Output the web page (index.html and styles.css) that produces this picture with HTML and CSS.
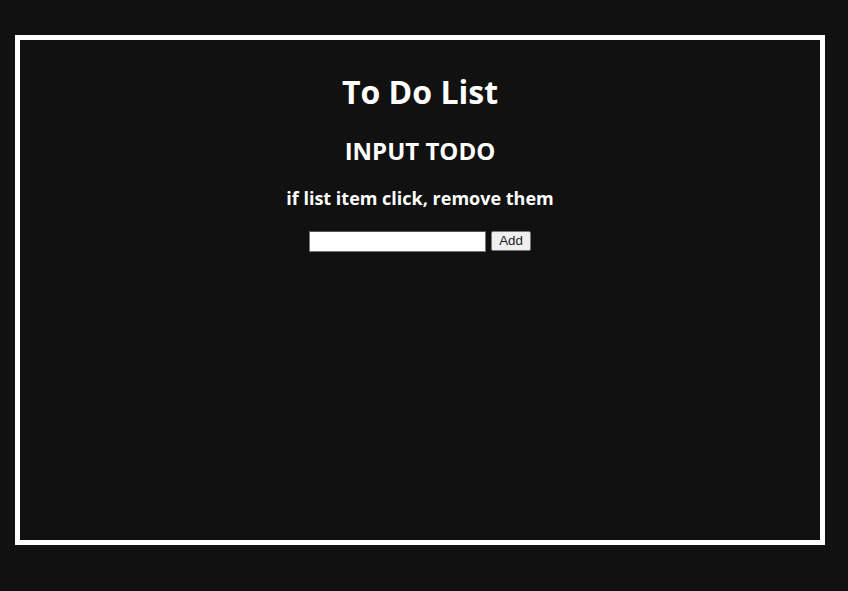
FILE: index.html
```html
<!DOCTYPE html>
<html>
<head>
<meta charset="utf-8">
<link rel="stylesheet" href="styles.css">
</head>
<body>
<div class="frame">
  <h1 class="title">To Do List</h1>
  <h2 class="subtitle">INPUT TODO</h2>
  <h3 class="hint">if list item click, remove them</h3>
  <div class="form">
    <input class="todo-input" type="text">
    <button class="add-btn">Add</button>
  </div>
  <ul class="list"></ul>
</div>
</body>
</html>
```
FILE: styles.css
```css
html, body {
  margin: 0;
  padding: 0;
  background: #111111;
}
body {
  padding: 35px 15px 0 15px;
  font-family: "Open Sans", "Noto Sans CJK KR", sans-serif;
  color: #ffffff;
}
.frame {
  width: 800px;
  height: 500px;
  border: 5px solid #ffffff;
  display: flex;
  flex-direction: column;
  align-items: center;
}
.title {
  margin: 32px 0 0 0;
  font-size: 32px;
  line-height: 40px;
  font-weight: 700;
}
.subtitle {
  margin: 24px 0 0 0;
  font-size: 24px;
  line-height: 30px;
  font-weight: 700;
}
.hint {
  margin: 19px 0 0 0;
  font-size: 18px;
  line-height: 26px;
  font-weight: 700;
}
.form {
  margin-top: 20px;
  display: flex;
  align-items: flex-start;
  gap: 5px;
}
.todo-input {
  width: 177px;
  height: 21px;
  box-sizing: border-box;
  margin: 0;
  border: 1px solid #767676;
  border-top-color: #555;
  background: #ffffff;
  padding: 1px 2px;
}
.add-btn {
  width: 40px;
  height: 20px;
  box-sizing: border-box;
  margin: 0;
  padding: 0;
  border: 1px solid #767676;
  border-radius: 2px;
  background: #efefef;
  color: #222;
  font-family: "Liberation Sans", Arial, sans-serif;
  font-size: 13.33px;
  line-height: 18px;
}
.list {
  margin: 0;
  padding: 0;
}
```
